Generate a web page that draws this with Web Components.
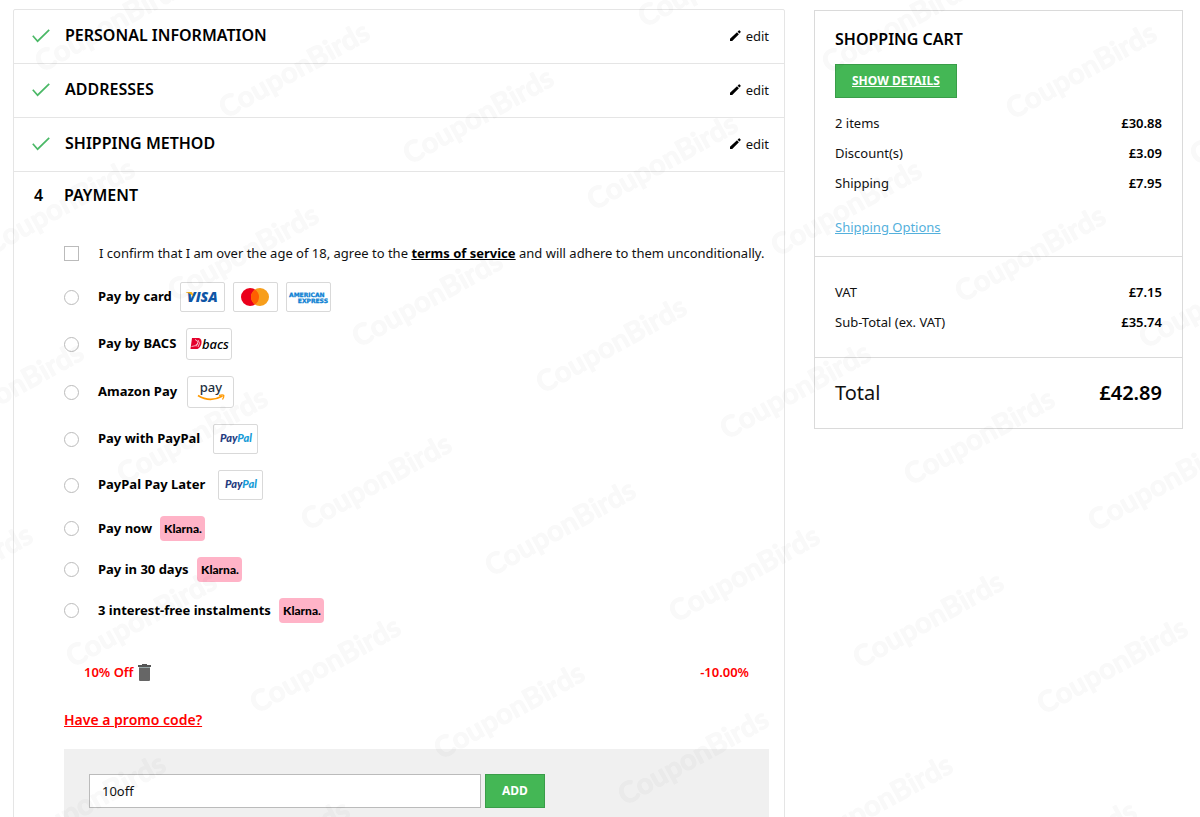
<!DOCTYPE html>
<html lang="en">
<head>
<meta charset="utf-8">
<title>Checkout</title>
<style>
    body {
        margin: 0;
        background-color: white;
        color: #111;
        font: 13px/20px "Noto Sans", "Open Sans", sans-serif;
    }
</style>
</head>
<body>
<checkout-page>
    <checkout-step title="Personal Information"></checkout-step>
    <checkout-step title="Addresses"></checkout-step>
    <checkout-step title="Shipping Method"></checkout-step>
    <payment-step>
        <payment-list></payment-list>
        <promo-code></promo-code>
    </payment-step>
    <shopping-cart slot="side">
        <cart-line label="2 items">£30.88</cart-line>
        <cart-line label="Discount(s)">£3.09</cart-line>
        <cart-line label="Shipping">£7.95</cart-line>
        <cart-line slot="tax" label="VAT">£7.15</cart-line>
        <cart-line slot="tax" label="Sub-Total (ex. VAT)">£35.74</cart-line>
        <cart-line slot="total" class="total" label="Total">£42.89</cart-line>
    </shopping-cart>
</checkout-page>
<water-mark></water-mark>

<script>
(function () {

function define(name, html, ready) {
    const template = document.createElement('template');
    template.innerHTML = html;
    customElements.define(name, class extends HTMLElement {
        connectedCallback() {
            if (this.shadowRoot) return;
            this.attachShadow({mode: 'open'});
            this.shadowRoot.appendChild(template.content.cloneNode(true));
            if (ready) ready(this, this.shadowRoot);
        }
    });
}

define('checkout-page', `
<style>
    :host {
        display: grid;
        grid-template-columns: minmax(0, 1fr) 369px;
        gap: 29px;
        align-items: start;
        padding: 9px 17px 0 13px;
    }
    main {
        border: 1px solid #e5e5e5;
        border-radius: 2px;
    }
    aside {
        padding-top: 1px;
    }
</style>
<main><slot></slot></main>
<aside><slot name="side"></slot></aside>
`);

define('checkout-step', `
<style>
    :host {
        display: flex;
        align-items: center;
        box-sizing: border-box;
        height: 54px;
        padding: 0 15px 2px 18px;
        border-bottom: 1px solid #e5e5e5;
    }
    .check {
        width: 18px;
        height: 14px;
        margin-right: 15px;
    }
    h2 {
        flex: 1;
        margin: 0;
        padding-bottom: 2px;
        font-size: 16px;
        font-weight: 600;
        line-height: 20px;
        color: #000;
        text-transform: uppercase;
    }
    button {
        display: flex;
        align-items: center;
        gap: 5px;
        padding: 0;
        border: 0;
        background: none;
        font: inherit;
        color: inherit;
        cursor: pointer;
    }
</style>
<svg class="check" viewBox="0 0 18 14" aria-hidden="true"><path d="M.8 6.8 5.6 12.2 17.2.9" fill="none" stroke="#4ab866" stroke-width="1.7"/></svg>
<h2></h2>
<button type="button">
    <svg width="11" height="11" viewBox="0 0 11 11" aria-hidden="true"><path d="M0 11V8.8L7 2.300 8.900 4.200 2.200 11zM7.600 1.700 8.800.5Q9.200.200 9.600.500L10.600 1.500Q10.900 1.900 10.600 2.200L9.400 3.500z"/></svg>
    edit
</button>
`, (el, root) => {
    root.querySelector('h2').textContent = el.getAttribute('title');
});

define('payment-step', `
<style>
    :host {
        display: block;
        padding: 13px 15px 24px 50px;
    }
    header {
        display: flex;
        margin-left: -30px;
        margin-bottom: 38px;
        font-size: 16px;
        font-weight: 600;
        color: #000;
    }
    header span {
        width: 30px;
    }
    h2 {
        margin: 0;
        font: inherit;
        text-transform: uppercase;
    }
</style>
<header><span>4</span><h2>Payment</h2></header>
<slot></slot>
`);

// logo artwork, drawn inside the bordered badge
const logos = {
    visa: `<svg width="43" height="28" viewBox="0 0 43 28"><text x="6" y="19" font-family="Open Sans" font-size="14" font-weight="800" font-style="italic" fill="#0e55a5">VISA</text><path d="M5 9h5q1.400 0 1.700 1.400l.6 3.600Q10 10.500 5 9.600z" fill="#f2ae14"/></svg>`,
    mastercard: `<svg width="43" height="28" viewBox="0 0 43 28"><circle cx="16" cy="14" r="9" fill="#eb001b"/><circle cx="26" cy="14" r="9" fill="#f79e1b"/><path d="M21 6.500a9 9 0 0 1 0 15a9 9 0 0 1 0-15z" fill="#ff5f00"/></svg>`,
    amex: `<svg width="43" height="28" viewBox="0 0 43 28" font-family="DejaVu Sans" font-size="6" font-weight="700" fill="#0b7fd3" stroke="#0b7fd3" stroke-width=".3"><text x="2" y="14">AMERICAN</text><text x="41" y="20" text-anchor="end">EXPRESS</text></svg>`,
    bacs: `<svg width="44" height="30" viewBox="0 0 44 30"><path d="M5 9h7q3 1 2.500 5Q14 18 10.500 20H3.500z" fill="#e4002b"/><path d="M8 10.500q5 2 1 7M11 11q3 3 0 7M4.500 17.500q4 0 6-3" fill="none" stroke="#fff" stroke-width=".7"/><text x="15" y="20" font-family="Noto Sans" font-size="13" font-weight="500" font-style="italic" fill="#000">bacs</text></svg>`,
    amazon: `<svg width="45" height="30" viewBox="0 0 45 30"><text x="23" y="15" text-anchor="middle" font-family="Noto Sans" font-size="13" font-weight="500" fill="#232f3e">pay</text><path d="M10 18.500q12 7.500 24.500.5" fill="none" stroke="#f90" stroke-width="1.700"/><path d="M31 18.500q4-1 4.800 0 .3 1.500-1.300 4" fill="none" stroke="#f90" stroke-width="1.300"/></svg>`,
    paypal: `<svg width="43" height="28" viewBox="0 0 43 28"><text x="6" y="17" font-family="Lato" font-size="11" font-weight="900" font-style="italic" fill="#253b80">Pay<tspan fill="#179bd7">Pal</tspan></text></svg>`,
    klarna: `<svg width="45" height="25" viewBox="0 0 45 25"><text x="23" y="17" text-anchor="middle" font-family="Lato" font-size="12" font-weight="900" fill="#000">Klarna.</text></svg>`
};

define('pay-badge', `
<style>
    :host {
        display: block;
        border: 1px solid #d9d9d9;
        border-radius: 2px;
        background: #fff;
    }
    :host([type=klarna]) {
        border: 0;
        border-radius: 4px;
        background: #ffb3c7;
    }
    :host([type=bacs]), :host([type=amazon]) {
        margin-left: 2px;
        border-radius: 3px;
    }
    :host([type=paypal]) {
        margin-left: 5px;
    }
    div {
        display: flex;
    }
</style>
<div></div>
`, (el, root) => {
    root.querySelector('div').innerHTML = logos[el.getAttribute('type')];
});

const methods = [
    ['Pay by card', 'visa', 'mastercard', 'amex'],
    ['Pay by BACS', 'bacs'],
    ['Amazon Pay', 'amazon'],
    ['Pay with PayPal', 'paypal'],
    ['PayPal Pay Later', 'paypal'],
    ['Pay now', 'klarna'],
    ['Pay in 30 days', 'klarna'],
    ['3 interest-free instalments', 'klarna']
];

define('payment-list', `
<style>
    :host {
        display: block;
    }
    .row {
        display: flex;
        align-items: center;
        gap: 8px;
    }
    .terms {
        margin-bottom: 19px;
        gap: 20px;
    }
    .methods {
        display: grid;
        gap: 16px;
    }
    .methods label {
        padding-bottom: 2px;
        font-weight: 700;
        color: #000;
    }
    input {
        appearance: none;
        flex: none;
        width: 15px;
        height: 15px;
        margin: 0;
        border: 1px solid #bbb;
        background: #fff;
    }
    input[type=radio] {
        margin-right: 11px;
        border-radius: 50%;
    }
    input:checked {
        background: #44b755;
    }
    a {
        color: #000;
        font-weight: 700;
    }
</style>
<div class="row terms">
    <input type="checkbox" id="terms">
    <label for="terms">I confirm that I am over the age of 18, agree to the <a href="#terms">terms of service</a> and will adhere to them unconditionally.</label>
</div>
<div class="methods"></div>
`, (el, root) => {
    root.querySelector('.methods').innerHTML = methods.map(([name, ...badges], i) => `
        <div class="row">
            <input type="radio" name="method" id="method${i}">
            <label for="method${i}">${name}</label>
            ${badges.map(type => `<pay-badge type="${type}"></pay-badge>`).join('')}
        </div>`).join('');
});

define('promo-code', `
<style>
    :host {
        display: block;
        margin-top: 39px;
    }
    .discount {
        display: flex;
        align-items: center;
        gap: 5px;
        padding: 0 20px;
        font-weight: 600;
        color: #f00;
    }
    .amount {
        margin-left: auto;
    }
    .remove {
        display: flex;
        padding: 0;
        border: 0;
        background: none;
        cursor: pointer;
    }
    .toggle {
        display: block;
        margin: 28px 0 19px;
        font-size: 14px;
        font-weight: 600;
        color: #f00;
    }
    form {
        display: flex;
        gap: 4px;
        padding: 25px;
        background: #f0f0f0;
    }
    input {
        box-sizing: border-box;
        flex: 0 1 392px;
        min-width: 0;
        height: 34px;
        padding: 0 12px;
        border: 1px solid #bbb;
        background: #fff;
        font: inherit;
        color: #111;
    }
    .add {
        height: 34px;
        padding: 0 16px;
        border: 1px solid #3a9d49;
        background: #44b755;
        color: #fff;
        font: inherit;
        font-size: 12px;
        font-weight: 700;
        text-transform: uppercase;
    }
</style>
<div class="discount">
    <span>10% Off</span>
    <button class="remove" type="button" aria-label="Remove discount">
        <svg width="13" height="17" viewBox="0 0 13 17"><path d="M4 0h5v1h4v2H0V1h4z" fill="#555"/><path d="M1 3h11v1H1z" fill="#9aa"/><path d="M1 4h11v12q0 1-1 1H2q-1 0-1-1z" fill="#666"/></svg>
    </button>
    <span class="amount">-10.00%</span>
</div>
<a class="toggle" href="#promo">Have a promo code?</a>
<form>
    <input type="text" value="10off" aria-label="Promo code">
    <button class="add" type="button">Add</button>
</form>
`);

define('shopping-cart', `
<style>
    :host {
        display: block;
        border: 1px solid #dadada;
    }
    section {
        padding: 18px 20px 19px;
    }
    section + section {
        border-top: 1px solid #dadada;
    }
    h2 {
        margin: 0 0 15px;
        font-size: 16px;
        font-weight: 600;
        line-height: 20px;
        color: #000;
        text-transform: uppercase;
    }
    .details {
        display: block;
        height: 34px;
        margin-bottom: 10px;
        padding: 0 16px;
        border: 1px solid #3a9d49;
        background: #44b755;
        color: #fff;
        font: inherit;
        font-size: 12px;
        font-weight: 700;
        text-decoration: underline;
        text-transform: uppercase;
    }
    a {
        display: block;
        margin-top: 19px;
        color: #54b0dc;
    }
    section.tax, section.total {
        padding: 20px;
    }
</style>
<section>
    <h2>Shopping Cart</h2>
    <button class="details" type="button">Show details</button>
    <slot></slot>
    <a href="#shipping">Shipping Options</a>
</section>
<section class="tax"><slot name="tax"></slot></section>
<section class="total"><slot name="total"></slot></section>
`);

define('cart-line', `
<style>
    :host {
        display: flex;
        justify-content: space-between;
        line-height: 30px;
    }
    :host(.total) {
        font-size: 20px;
    }
    b {
        font-weight: 600;
        color: #000;
    }
</style>
<span></span>
<b><slot></slot></b>
`, (el, root) => {
    root.querySelector('span').textContent = el.getAttribute('label');
});

define('water-mark', `
<style>
    :host {
        position: fixed;
        inset: 0;
        overflow: hidden;
        pointer-events: none;
    }
    svg {
        display: block;
        width: 100%;
        height: 100%;
        opacity: .024;
    }
    text {
        font: 700 29px Lato, sans-serif;
        stroke: #000;
        stroke-width: 1px;
        stroke-linejoin: round;
    }
</style>
<svg aria-hidden="true"></svg>
`, (el, root) => {
    // slanted grid: one step right is (184, 46), one step down is (-51, 183)
    let marks = '';
    for (let row = -2; row < 7; row++) {
        for (let col = -3; col < 9; col++) {
            const x = 42 + col * 184 - row * 51;
            const y = 73 + col * 46 + row * 183;
            if (x > -150 && x < 1200 && y > 0 && y < 900) {
                marks += `<text transform="translate(${x} ${y}) rotate(-29)">CouponBirds</text>`;
            }
        }
    }
    root.querySelector('svg').innerHTML = marks;
});

})();
</script>
</body>
</html>
